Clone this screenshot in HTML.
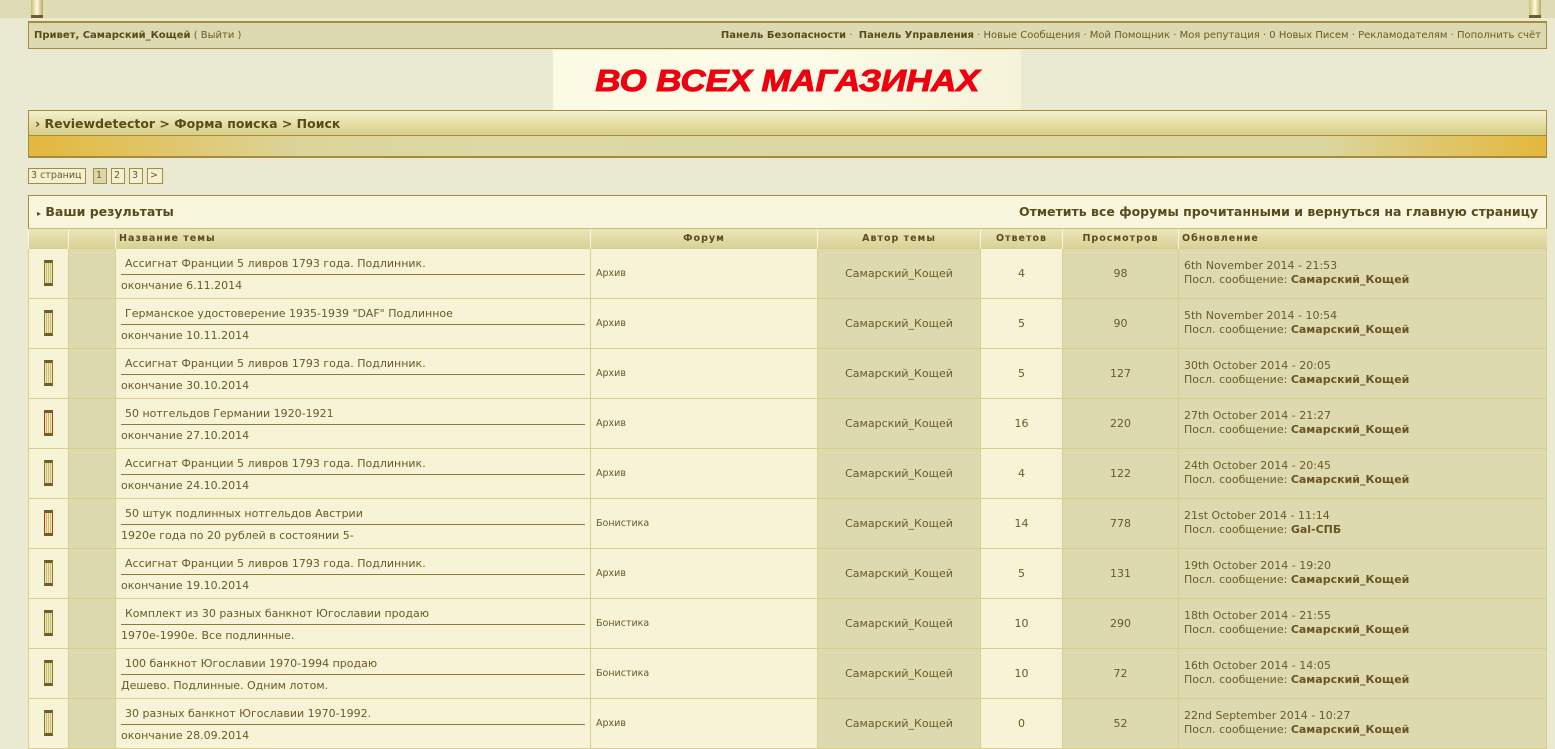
<!DOCTYPE html>
<html><head><meta charset="utf-8"><style>
*{box-sizing:border-box;margin:0;padding:0}
body{width:1555px;height:742px;overflow:hidden;background:#eae9d1;font-family:"DejaVu Sans","Liberation Sans",sans-serif;font-size:10.5px;color:#6b5a25;position:relative}
.abs{position:absolute}
.topband{left:0;top:0;width:1555px;height:18px;background:#dedcb4}
.userbar{left:28px;top:21px;width:1519px;height:28px;background:#ddd9b0;border:2px solid #a88a3b;border-width:2px 1px 1px 1px;line-height:26px;padding:0 5px;font-size:10px}
.userbar b{color:#5a4a1c}
.userbar .r{position:absolute;right:5px;top:0}
.ad{left:553px;top:50px;width:468px;height:60px;background:linear-gradient(90deg,#fbfae3,#fdfdea,#f5f3d8);text-align:center;line-height:62px}
.ad span{display:inline-block;font-family:"Liberation Sans",sans-serif;font-weight:bold;font-style:italic;font-size:31px;color:#f0000f;transform:scaleX(1.12);-webkit-text-stroke:1px #f0000f}
.bc{left:28px;top:110px;width:1519px;height:26px;border:1px solid #a88a3b;background:linear-gradient(#f4f1cf,#e6e0a6 50%,#d6cf8a);font-weight:bold;font-size:12.5px;color:#5a4a1c;line-height:25px;padding-left:6px}
.gold{left:28px;top:136px;width:1519px;height:22px;border:1px solid #a88a3b;border-top:0;border-bottom:2px solid #a88a3b;background:linear-gradient(90deg,#e3b83d,#dcd49a 18%,#ddd8a4 30%,#dbd6a0 85%,#e3b83d)}
.pg{top:168px;height:16px;border:1px solid #a88a3b;background:#f3f0d3;font-size:9.5px;line-height:14px;padding:0 2px;color:#6b5a25}
.res{left:28px;top:195px;width:1519px;height:34px;border:1px solid #a88a3b;border-bottom:1px solid #c9bd78;background:#f8f6dc;font-weight:bold;font-size:12.5px;color:#5a4a1c;line-height:32px}
table{position:absolute;left:28px;top:229px;width:1519px;border-collapse:collapse;table-layout:fixed}
th{height:19px;background:linear-gradient(#ece6b6,#d9d198);font-size:9.5px;letter-spacing:1px;color:#5a4a1c;border-left:1px solid #f8f6dc;text-align:center}
td{height:50px;border:1px solid #d9cf8a;vertical-align:middle}
.l{background:#f6f3d6}.d{background:#dedab0}
.c{text-align:center;font-size:11px}
.t1{padding:3px 4px 4px 4px;margin:0 5px 0 5px;border-bottom:1px solid #8e7a35;font-size:11px}
.t2{padding:4px 5px 0 5px;font-size:11px}
.f{font-size:9.5px;padding-left:5px}
.u{padding-left:5px;font-size:11px;line-height:14px}
.u b{color:#6b5322}
.ic{display:block;margin:0 auto;width:9px;height:26px;border:1px solid #8a7630;border-top:3px solid #6f5f26;border-bottom:3px solid #6f5f26;background:repeating-linear-gradient(90deg,#f0e9b6 0 1px,#c9bd78 1px 2px)}
.ic.h{border-left-color:#b8321f;border-right-color:#b8321f}
</style></head><body>
<div class="abs topband"></div>
<div class="abs" style="left:31px;top:0;width:12px;height:18px;background:linear-gradient(90deg,#c9bd78,#fffbe0,#b8a860);border-bottom:3px solid #6f5f26"></div>
<div class="abs" style="left:1529px;top:0;width:12px;height:18px;background:linear-gradient(90deg,#c9bd78,#fffbe0,#b8a860);border-bottom:3px solid #6f5f26"></div>
<div class="abs userbar"><b>Привет, Самарский_Кощей</b> ( Выйти )<span class="r"><b>Панель Безопасности</b> · &nbsp;<b>Панель Управления</b> · Новые Сообщения · Мой Помощник · Моя репутация · 0 Новых Писем · Рекламодателям · Пополнить счёт</span></div>
<div class="abs ad"><span>ВО ВСЕХ МАГАЗИНАХ</span></div>
<div class="abs bc">› Reviewdetector &gt; Форма поиска &gt; Поиск</div>
<div class="abs gold"></div>
<div class="abs pg" style="left:28px;width:58px">3 страниц</div>
<div class="abs pg" style="left:93px;width:14px;background:#dcd7a8">1</div>
<div class="abs pg" style="left:111px;width:14px">2</div>
<div class="abs pg" style="left:129px;width:14px">3</div>
<div class="abs pg" style="left:147px;width:16px">&gt;</div>
<div class="abs res"><span style="padding-left:8px;font-size:8px">▸</span> Ваши результаты<span style="position:absolute;right:8px">Отметить все форумы прочитанными и вернуться на главную страницу</span></div>
<table>
<colgroup><col style="width:40px"><col style="width:47px"><col style="width:475px"><col style="width:227px"><col style="width:163px"><col style="width:82px"><col style="width:116px"><col></colgroup>
<tr><th></th><th></th><th style="text-align:left;padding-left:3px">Название темы</th><th>Форум</th><th>Автор темы</th><th>Ответов</th><th>Просмотров</th><th style="text-align:left;padding-left:3px">Обновление</th></tr>
<tr><td class="l"><i class="ic"></i></td><td class="d"></td><td class="l"><div class="t1">Ассигнат Франции 5 ливров 1793 года. Подлинник.</div><div class="t2">окончание 6.11.2014</div></td><td class="l f">Архив</td><td class="d c">Самарский_Кощей</td><td class="l c">4</td><td class="d c">98</td><td class="d u">6th November 2014 - 21:53<br>Посл. сообщение: <b>Самарский_Кощей</b></td></tr>
<tr><td class="l"><i class="ic"></i></td><td class="d"></td><td class="l"><div class="t1">Германское удостоверение 1935-1939 "DAF" Подлинное</div><div class="t2">окончание 10.11.2014</div></td><td class="l f">Архив</td><td class="d c">Самарский_Кощей</td><td class="l c">5</td><td class="d c">90</td><td class="d u">5th November 2014 - 10:54<br>Посл. сообщение: <b>Самарский_Кощей</b></td></tr>
<tr><td class="l"><i class="ic"></i></td><td class="d"></td><td class="l"><div class="t1">Ассигнат Франции 5 ливров 1793 года. Подлинник.</div><div class="t2">окончание 30.10.2014</div></td><td class="l f">Архив</td><td class="d c">Самарский_Кощей</td><td class="l c">5</td><td class="d c">127</td><td class="d u">30th October 2014 - 20:05<br>Посл. сообщение: <b>Самарский_Кощей</b></td></tr>
<tr><td class="l"><i class="ic h"></i></td><td class="d"></td><td class="l"><div class="t1">50 нотгельдов Германии 1920-1921</div><div class="t2">окончание 27.10.2014</div></td><td class="l f">Архив</td><td class="d c">Самарский_Кощей</td><td class="l c">16</td><td class="d c">220</td><td class="d u">27th October 2014 - 21:27<br>Посл. сообщение: <b>Самарский_Кощей</b></td></tr>
<tr><td class="l"><i class="ic"></i></td><td class="d"></td><td class="l"><div class="t1">Ассигнат Франции 5 ливров 1793 года. Подлинник.</div><div class="t2">окончание 24.10.2014</div></td><td class="l f">Архив</td><td class="d c">Самарский_Кощей</td><td class="l c">4</td><td class="d c">122</td><td class="d u">24th October 2014 - 20:45<br>Посл. сообщение: <b>Самарский_Кощей</b></td></tr>
<tr><td class="l"><i class="ic h"></i></td><td class="d"></td><td class="l"><div class="t1">50 штук подлинных нотгельдов Австрии</div><div class="t2">1920е года по 20 рублей в состоянии 5-</div></td><td class="l f">Бонистика</td><td class="d c">Самарский_Кощей</td><td class="l c">14</td><td class="d c">778</td><td class="d u">21st October 2014 - 11:14<br>Посл. сообщение: <b>Gal-СПБ</b></td></tr>
<tr><td class="l"><i class="ic"></i></td><td class="d"></td><td class="l"><div class="t1">Ассигнат Франции 5 ливров 1793 года. Подлинник.</div><div class="t2">окончание 19.10.2014</div></td><td class="l f">Архив</td><td class="d c">Самарский_Кощей</td><td class="l c">5</td><td class="d c">131</td><td class="d u">19th October 2014 - 19:20<br>Посл. сообщение: <b>Самарский_Кощей</b></td></tr>
<tr><td class="l"><i class="ic"></i></td><td class="d"></td><td class="l"><div class="t1">Комплект из 30 разных банкнот Югославии продаю</div><div class="t2">1970е-1990е. Все подлинные.</div></td><td class="l f">Бонистика</td><td class="d c">Самарский_Кощей</td><td class="l c">10</td><td class="d c">290</td><td class="d u">18th October 2014 - 21:55<br>Посл. сообщение: <b>Самарский_Кощей</b></td></tr>
<tr><td class="l"><i class="ic"></i></td><td class="d"></td><td class="l"><div class="t1">100 банкнот Югославии 1970-1994 продаю</div><div class="t2">Дешево. Подлинные. Одним лотом.</div></td><td class="l f">Бонистика</td><td class="d c">Самарский_Кощей</td><td class="l c">10</td><td class="d c">72</td><td class="d u">16th October 2014 - 14:05<br>Посл. сообщение: <b>Самарский_Кощей</b></td></tr>
<tr><td class="l"><i class="ic"></i></td><td class="d"></td><td class="l"><div class="t1">30 разных банкнот Югославии 1970-1992.</div><div class="t2">окончание 28.09.2014</div></td><td class="l f">Архив</td><td class="d c">Самарский_Кощей</td><td class="l c">0</td><td class="d c">52</td><td class="d u">22nd September 2014 - 10:27<br>Посл. сообщение: <b>Самарский_Кощей</b></td></tr>
</table>
</body></html>
